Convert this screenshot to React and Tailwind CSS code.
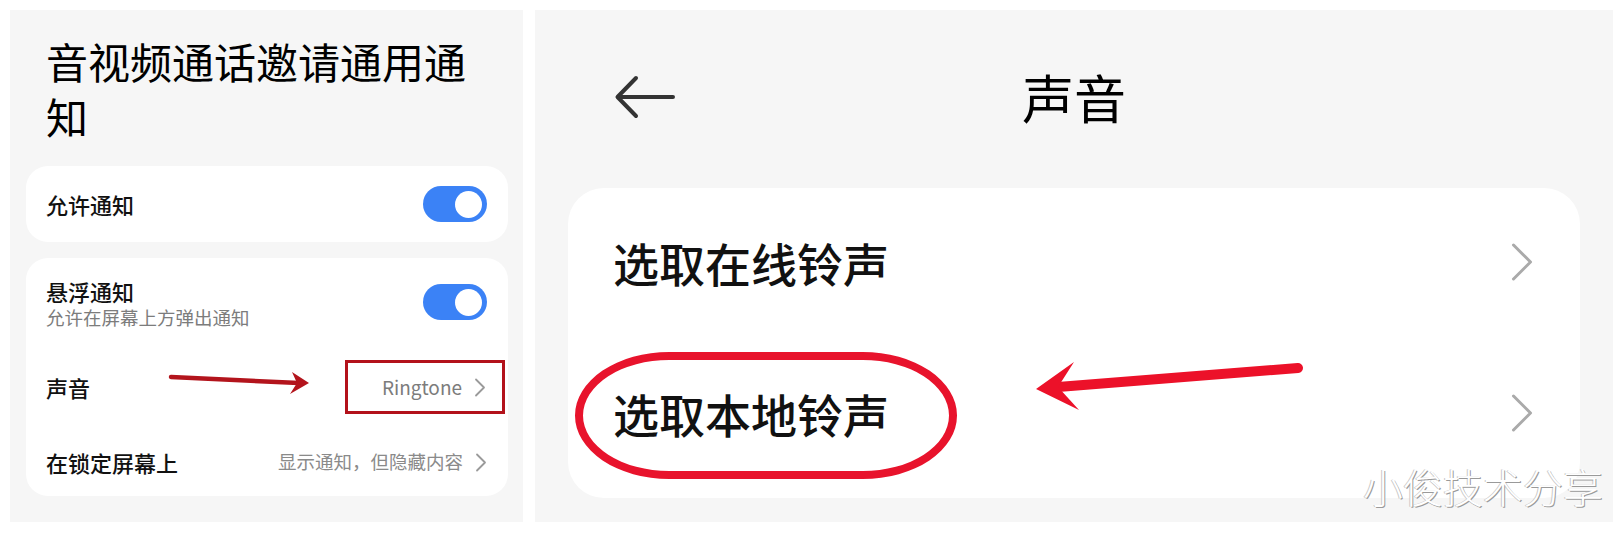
import React from 'react';

const Toggle = () => (
  <div className="w-[64px] h-[36px] rounded-full bg-[#3b82f6] flex items-center justify-end pr-[5px]">
    <div className="w-[27px] h-[27px] rounded-full bg-white" />
  </div>
);

const SmallChevron = () => (
  <svg width="12" height="19" viewBox="0 0 12 19" fill="none">
    <path d="M2 1.5 L10 9.5 L2 17.5" stroke="#9a9a9a" strokeWidth="1.8" strokeLinecap="round" strokeLinejoin="round" />
  </svg>
);

const BigChevron = () => (
  <svg width="22" height="38" viewBox="0 0 22 38" fill="none">
    <path d="M2.5 2 L19.5 19 L2.5 36" stroke="#aaaaaa" strokeWidth="3" strokeLinecap="round" strokeLinejoin="round" />
  </svg>
);

const App = () => {
  return (
    <div className="w-[1624px] h-[534px] bg-white flex gap-[12px] pl-[10px] pt-[10px] font-['Noto_Sans_CJK_SC','Noto_Sans',sans-serif]">
      {/* left screenshot: notification settings */}
      <div className="w-[513px] h-[512px] bg-[#f6f6f6] pl-4 pr-[15px] flex flex-col">
        <h1 className="pl-5 pt-[23px] w-[450px] text-[42px] leading-[55px] text-black font-normal">
          音视频通话邀请通用通知
        </h1>

        <div className="mt-[23px] h-[76px] bg-white rounded-[22px] flex items-center justify-between pl-5 pr-[21px]">
          <span className="text-[22px] font-medium text-[#111]">允许通知</span>
          <Toggle />
        </div>

        <div className="relative mt-4 bg-white rounded-[22px] pl-5 pr-[21px] flex flex-col">
          <div className="h-[88px] flex items-center justify-between">
            <div className="flex flex-col">
              <span className="text-[22px] leading-[30px] font-medium text-[#111]">悬浮通知</span>
              <span className="text-[18.5px] leading-[22px] text-[#7c7c7c]">允许在屏幕上方弹出通知</span>
            </div>
            <Toggle />
          </div>

          <div className="h-[82px] flex items-center justify-between">
            <span className="text-[22px] font-medium text-[#111]">声音</span>
            <div className="-mr-[18px] h-[54px] flex items-center gap-3 border-[3px] border-[#b3121b] pl-[34px] pr-[16px]">
              <span className="text-[19px] text-[#7c7c7c]">Ringtone</span>
              <SmallChevron />
            </div>
          </div>

          <div className="h-[68px] flex items-center justify-between">
            <span className="text-[22px] font-medium text-[#111]">在锁定屏幕上</span>
            <div className="flex items-center gap-3">
              <span className="text-[18.5px] text-[#8a8a8a]">显示通知，但隐藏内容</span>
              <SmallChevron />
            </div>
          </div>

          {/* annotation arrow */}
          <svg className="absolute left-[139px] top-[110px]" width="150" height="30" viewBox="0 0 150 30" fill="none">
            <path d="M6 9 L134 15" stroke="#b3141c" strokeWidth="4.5" strokeLinecap="round" />
            <path d="M144 15 L127 4 L132 15 L125 26 Z" fill="#b3141c" />
          </svg>
        </div>
      </div>

      {/* right screenshot: sound picker */}
      <div className="relative w-[1078px] h-[512px] bg-[#f6f6f6] px-[33px] flex flex-col">
        <div className="h-[174px] grid grid-cols-[1fr_auto_1fr] items-center">
          <svg className="ml-[46px]" width="62" height="44" viewBox="0 0 62 44" fill="none">
            <path d="M59 22 H4 M22 3 L3.5 22 L22 41" stroke="#333" strokeWidth="4" strokeLinecap="round" strokeLinejoin="round" />
          </svg>
          <div className="text-[52px] leading-none text-black">声音</div>
          <div />
        </div>

        <div className="relative mt-1 h-[310px] bg-white rounded-[36px] flex flex-col">
          <div className="h-[148px] flex items-center justify-between pl-[45px] pr-[47px]">
            <span className="text-[46px] font-medium text-[#111]">选取在线铃声</span>
            <BigChevron />
          </div>
          <div className="relative h-[154px] flex items-center justify-between pl-[45px] pr-[47px]">
            <span className="text-[46px] font-medium text-[#111]">选取本地铃声</span>
            <BigChevron />
            <div className="absolute left-[7px] top-[16px] w-[382px] h-[127px] border-[8px] border-[#e8132c] rounded-[95px/64px]" />
          </div>

          {/* annotation arrow */}
          <svg className="absolute left-[462px] top-[166px]" width="276" height="64" viewBox="0 0 276 64" fill="none">
            <path d="M28 33 L268 14" stroke="#ec1129" strokeWidth="10" strokeLinecap="round" />
            <path d="M6 35 L44 8 L28 33 L49 56 Z" fill="#ec1129" />
          </svg>
        </div>

        <div className="absolute right-[10px] bottom-[16px] text-[40px] leading-none font-light text-white [text-shadow:1px_1px_0_#9a9a9a,-1px_0_0_#c8c8c8]">
          小俊技术分享
        </div>
      </div>
    </div>
  );
};

export default App;
